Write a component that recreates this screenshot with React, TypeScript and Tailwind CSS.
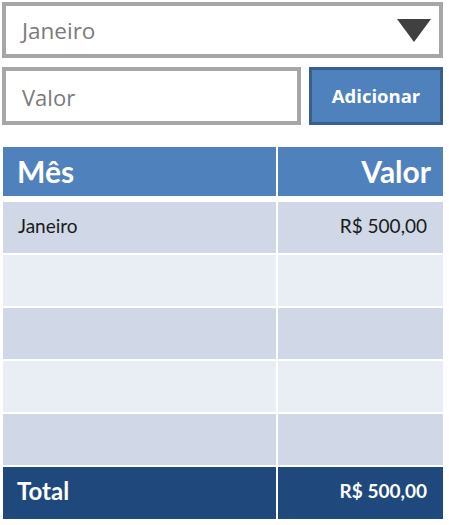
export default function App() {
  const rows = [
    { mes: "Janeiro", valor: "R$ 500,00" },
    { mes: "", valor: "" },
    { mes: "", valor: "" },
    { mes: "", valor: "" },
    { mes: "", valor: "" },
  ];

  return (
    <div className="w-[449px] h-[525px] bg-white pt-[2px] pl-[2px]" style={{ fontFamily: "'Open Sans', sans-serif" }}>
      {/* Month select */}
      <div className="w-[441px] h-[56px] border-[4px] border-[#a6a6a6] bg-white flex items-center justify-between pl-[16px] pr-[8px]">
        <span className="text-[22.5px] text-[#7a7a7a] pt-[2px]">Janeiro</span>
        <svg width="34" height="23" viewBox="0 0 34 23">
          <polygon points="0,0 34,0 17,23" fill="#404040" />
        </svg>
      </div>

      {/* Value + button */}
      <div className="flex mt-[9px] gap-[8px]">
        <div className="w-[299px] h-[58px] border-[4px] border-[#a6a6a6] bg-white flex items-center pl-[16px]">
          <span className="text-[22px] text-[#7a7a7a] pt-[2px]">Valor</span>
        </div>
        <div className="w-[134px] h-[58px] border-[3px] border-[#3a5f8f] bg-[#4f81bd] flex items-center justify-center">
          <span className="text-[18.5px] font-bold text-white">Adicionar</span>
        </div>
      </div>

      {/* Table */}
      <div className="mt-[22px] ml-[1px] w-[440px]" style={{ fontFamily: "Lato, sans-serif" }}>
        <div className="h-[49px] flex bg-[#4f81bd] text-white font-bold text-[30px]">
          <div className="w-[275px] flex items-center pl-[14px] border-r-2 border-white">Mês</div>
          <div className="flex-1 flex items-center justify-end pr-[12px]">Valor</div>
        </div>
        <div className="mt-[6px] flex flex-col gap-[2px]">
          {rows.map((r, i) => (
            <div key={i} className={`h-[51px] flex text-[19px] text-[#1a1a1a] ${i % 2 === 0 ? "bg-[#d0d8e8]" : "bg-[#e9edf4]"}`}>
              <div className="w-[275px] flex items-center pl-[15px] pb-[3px] border-r-2 border-white">{r.mes}</div>
              <div className="flex-1 flex items-center justify-end pr-[16px] pb-[3px]">{r.valor}</div>
            </div>
          ))}
          <div className="h-[52px] flex bg-[#1f497d] text-white font-bold">
            <div className="w-[275px] flex items-center pl-[14px] pb-[4px] border-r-2 border-white text-[24px]">Total</div>
            <div className="flex-1 flex items-center justify-end pr-[16px] pb-[4px] text-[19px]">R$ 500,00</div>
          </div>
        </div>
      </div>
    </div>
  );
}
